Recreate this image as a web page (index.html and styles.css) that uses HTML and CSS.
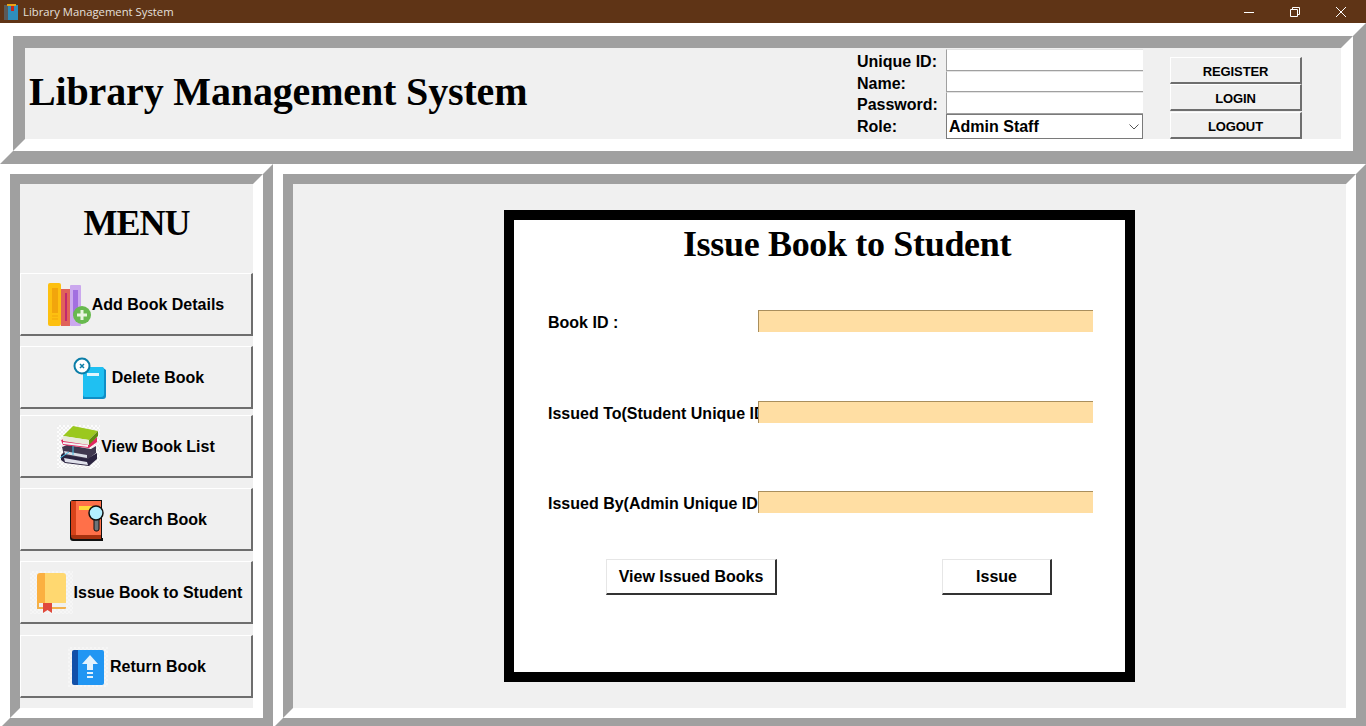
FILE: index.html
```html
<!DOCTYPE html>
<html lang="en">
<head>
  <meta charset="UTF-8">
  <title>Library Management System</title>
  <link rel="stylesheet" href="styles.css">
</head>
<body>

  <div class="title-bar">
    <div class="app-name">
      <svg class="app-icon" width="14" height="16" viewBox="0 0 14 16">
        <rect x="0" y="1" width="5" height="15" fill="#5a5a5a"/>
        <rect x="4" y="1" width="10" height="15" fill="#2f8dbb"/>
        <rect x="3" y="0" width="9" height="2" fill="#e8a317"/>
        <rect x="7" y="2" width="3" height="5" fill="#c8261c"/>
      </svg>
      <span>Library Management System</span>
    </div>
    <div class="window-controls">
      <svg width="12" height="12" viewBox="0 0 12 12"><path d="M1 6.500h10" stroke="#fff" fill="none"/></svg>
      <svg width="12" height="12" viewBox="0 0 12 12"><path d="M1.500 3.500h7v7h-7zM3.500 3.500v-2h7v7h-2" stroke="#fff" fill="none"/></svg>
      <svg width="12" height="12" viewBox="0 0 12 12"><path d="M1 1l10 10M11 1L1 11" stroke="#fff" fill="none"/></svg>
    </div>
  </div>

  <header class="bevel-outer header-panel">
    <div class="bevel-inner header-inner">
      <h1 class="app-title">Library Management System</h1>
      <div class="login-form">
        <label class="login-label">Unique ID:</label><input class="login-input" type="text">
        <label class="login-label">Name:</label><input class="login-input" type="text">
        <label class="login-label">Password:</label><input class="login-input" type="password">
        <label>Role:</label>
        <div class="role-select">
          <span>Admin Staff</span>
          <svg width="10" height="6" viewBox="0 0 10 6"><path d="M.5.5L5 5 9.500.5" stroke="#555" fill="none"/></svg>
        </div>
      </div>
      <div class="login-buttons">
        <button class="bevel-btn login-btn">REGISTER</button>
        <button class="bevel-btn login-btn">LOGIN</button>
        <button class="bevel-btn login-btn logout-btn">LOGOUT</button>
      </div>
    </div>
  </header>

  <div class="content">
    <aside class="bevel-outer side-panel">
      <div class="bevel-inner side-inner">
        <div class="menu-title">MENU</div>

        <button class="bevel-btn menu-btn">
          <svg class="menu-icon" viewBox="0 0 44 44">
            <rect x="0" y="0" width="13" height="43" rx="2" fill="#fdc010"/>
            <rect x="4" y="5" width="6" height="25" fill="#f2a50c"/>
            <path d="M4 33h6M4 36h6" stroke="#f2a50c"/>
            <rect x="13" y="6" width="9" height="37" fill="#e0625a"/>
            <rect x="17" y="10" width="2" height="28" fill="#c2296f"/>
            <rect x="22" y="2" width="11" height="41" rx="1" fill="#cba8ee"/>
            <rect x="25" y="7" width="5" height="26" fill="#a26fe0"/>
            <circle cx="34" cy="32" r="9" fill="#68b94f"/>
            <path d="M34 27v10M29 32h10" stroke="#e8f5e0" stroke-width="3"/>
          </svg>
          <span>Add Book Details</span>
        </button>

        <button class="bevel-btn menu-btn">
          <svg class="menu-icon" viewBox="0 0 44 44">
            <path d="M15 11h19l4 3v26a3 3 0 0 1-3 3H15z" fill="#0f8ec6"/>
            <path d="M15 11h19a2 2 0 0 1 2 2v25a3 3 0 0 1-3 3H17a2 2 0 0 1-2-2z" fill="#1fc0f2"/>
            <rect x="19" y="17" width="12" height="3" fill="#dff5fd"/>
            <circle cx="14" cy="10" r="7.500" fill="#fff" stroke="#0b7ea8" stroke-width="2"/>
            <path d="M12 8l4 4M16 8l-4 4" stroke="#0b7ea8" stroke-width="1.500"/>
          </svg>
          <span>Delete Book</span>
        </button>

        <button class="bevel-btn menu-btn">
          <svg class="menu-icon" viewBox="0 0 44 44">
            <defs>
              <pattern id="check" width="4" height="4" patternUnits="userSpaceOnUse">
                <rect width="4" height="4" fill="#fcfcfc"/>
                <rect width="2" height="2" fill="#eeeeee"/>
                <rect x="2" y="2" width="2" height="2" fill="#eeeeee"/>
              </pattern>
              <pattern id="check-faint" width="4" height="4" patternUnits="userSpaceOnUse">
                <rect width="4" height="4" fill="#f6f6f6"/>
                <rect width="2" height="2" fill="#f1f1f1"/>
                <rect x="2" y="2" width="2" height="2" fill="#f1f1f1"/>
              </pattern>
            </defs>
            <rect width="43" height="43" fill="url(#check)"/>
            <path d="M4 30l3-3 26 5 7-4v6l-8 7-24-3-4-3z" fill="#2b2440"/>
            <path d="M7 33l23 4 1 3-23-3z" fill="#dfe0ea"/>
            <path d="M5 22l5-2 24 4 5-3v7l-8 6-24-4z" fill="#40384f"/>
            <path d="M7 26l23 4v3L8 29z" fill="#d8dbe4"/>
            <path d="M4 15l6-2 24 4 6-5v5l-8 6-26-3z" fill="#e0285f"/>
            <path d="M6 17l25 3v2L6 19z" fill="#f4f4f6"/>
            <path d="M6 11l10-10 25 5-9 9z" fill="#9bc81e"/>
            <path d="M6 11l26 4v5L6 16z" fill="#e8eadc"/>
            <path d="M32 15l9-9v5l-9 9z" fill="#5f8a10"/>
            <path d="M3 33l9-6M16 21v9" stroke="#45c2e6" fill="none"/>
          </svg>
          <span>View Book List</span>
        </button>

        <button class="bevel-btn menu-btn">
          <svg class="menu-icon" viewBox="0 0 44 44">
            <path d="M8 2h29v38h1v3H8a3 3 0 0 1-3-3V5a3 3 0 0 1 3-3z" fill="#111"/>
            <rect x="6" y="3" width="5" height="34" fill="#d8431a"/>
            <rect x="11" y="3" width="25" height="34" fill="#ff7049"/>
            <path d="M6 37h30v4H9a3 3 0 0 1-3-3z" fill="#a8320f"/>
            <rect x="14" y="8" width="14" height="4" fill="#ffd83a"/>
            <rect x="29" y="19" width="5" height="14" rx="2" fill="#6d7478" stroke="#111"/>
            <circle cx="31" cy="15" r="7" fill="#b3efff" stroke="#111" stroke-width="1.500"/>
          </svg>
          <span>Search Book</span>
        </button>

        <button class="bevel-btn menu-btn">
          <svg class="menu-icon" viewBox="0 0 44 44">
            <rect width="43" height="43" fill="url(#check-faint)"/>
            <path d="M10 2h8v36h-11V5a3 3 0 0 1 3-3z" fill="#fbb040"/>
            <path d="M15 2h18a3 3 0 0 1 3 3v32H15z" fill="#ffd870"/>
            <rect x="7" y="32" width="29" height="6" rx="1" fill="#f2b04c"/>
            <rect x="9" y="32" width="27" height="4" fill="#f0f0ee"/>
            <path d="M13 32h9v10l-4.500-3-4.500 3z" fill="#e04a3c"/>
          </svg>
          <span>Issue Book to Student</span>
        </button>

        <button class="bevel-btn menu-btn">
          <svg class="menu-icon" viewBox="0 0 44 44">
            <rect x="2" y="2" width="40" height="40" fill="url(#check-faint)"/>
            <path d="M9 5h27a2 2 0 0 1 2 2v31a2 2 0 0 1-2 2H9z" fill="#2196f3"/>
            <path d="M8 5h4v35H8a2 2 0 0 1-2-2V7a2 2 0 0 1 2-2z" fill="#1250a8"/>
            <path d="M24 10l8 9h-5v6h-6v-6h-5z" fill="#e3f2fd"/>
            <path d="M21 27h6v2h-6zM21 31h6v2h-6z" fill="#e3f2fd"/>
          </svg>
          <span>Return Book</span>
        </button>
      </div>
    </aside>

    <main class="bevel-outer main-panel">
      <div class="bevel-inner main-inner">
        <section class="issue-card">
          <h2 class="issue-title">Issue Book to Student</h2>
          <div class="issue-row">
            <label class="issue-label">Book ID :</label>
            <input class="issue-input" type="text">
          </div>
          <div class="issue-row">
            <label class="issue-label">Issued To(Student Unique ID</label>
            <input class="issue-input" type="text">
          </div>
          <div class="issue-row">
            <label class="issue-label">Issued By(Admin Unique ID</label>
            <input class="issue-input" type="text">
          </div>
          <div class="issue-actions">
            <button class="plain-btn view-btn">View Issued Books</button>
            <button class="plain-btn issue-btn">Issue</button>
          </div>
        </section>
      </div>
    </main>
  </div>

</body>
</html>
```

FILE: styles.css
```css
* {
  box-sizing: border-box;
}

html, body {
  height: 726px;
  margin: 0;
  overflow: hidden;
}

body {
  background-color: #fff;
  font-family: "Liberation Sans", Arial, sans-serif;
  font-weight: bold;
  font-size: 16px;
  color: #000;
}

/* title bar */
.title-bar {
  height: 23px;
  background-color: #5f3416;
  display: flex;
  justify-content: space-between;
  align-items: center;
  color: #e6e0dc;
}

.app-name {
  display: flex;
  align-items: center;
  padding-left: 4px;
  font-family: "Open Sans", sans-serif;
  font-weight: normal;
  font-size: 11.300px;
}

.app-icon {
  margin-right: 5px;
}

.window-controls {
  display: flex;
  gap: 34px;
  padding-right: 19px;
}

/* double bevel, the mitred corners come from the css borders */
.bevel-outer {
  border-style: solid;
  border-color: #fff #a0a0a0 #a0a0a0 #fff;
}

.bevel-inner {
  height: 100%;
  border-style: solid;
  border-color: #a0a0a0 #fff #fff #a0a0a0;
  background-color: #f0f0f0;
}

.bevel-btn {
  display: flex;
  justify-content: center;
  align-items: center;
  padding: 0;
  background-color: #f0f0f0;
  border-style: solid;
  border-width: 1px 2px 2px 1px;
  border-color: #fff #6e6e6e #6e6e6e #fff;
  font-family: "Liberation Sans", Arial, sans-serif;
  font-weight: bold;
  color: #000;
}

/* header */
.header-panel {
  height: 141px;
  border-width: 13px;
}

.header-inner {
  border-width: 12px;
  display: flex;
  align-items: flex-start;
}

.app-title {
  width: 828px;
  margin: 0;
  padding: 21px 0 0 4px;
  font-family: "Liberation Serif", "Times New Roman", serif;
  font-size: 40px;
  line-height: 46px;
  letter-spacing: -.15px;
  white-space: nowrap;
}

.login-form {
  width: 286px;
  margin: 1px 0 0 4px;
  display: grid;
  grid-template-columns: 89px 197px;
  grid-template-rows: 22px 21px 22px 25px;
  align-items: center;
}

.login-form label {
  line-height: 20px;
}

.login-label {
  padding-top: 4px;
}

.login-input {
  height: 100%;
  width: 100%;
  padding: 0;
  background-color: #fff;
  border: none;
  border-top: 1px solid #e4e4e4;
  border-left: 1px solid #a0a0a0;
  border-bottom: 1px solid #a0a0a0;
}

.role-select {
  height: 100%;
  display: flex;
  justify-content: space-between;
  align-items: center;
  padding: 0 3px 0 2px;
  background-color: #fff;
  border: 1px solid #7a7a7a;
}

.login-buttons {
  width: 132px;
  margin: 9px 0 0 27px;
  display: flex;
  flex-direction: column;
}

.login-btn {
  width: 132px;
  height: 27px;
  padding-top: 2px;
  font-size: 13px;
  letter-spacing: -.1px;
}

.logout-btn {
  margin-top: 1px;
}

/* lower part */
.content {
  height: 564px;
  display: flex;
}

.side-panel {
  width: 273px;
  height: 564px;
  border-width: 10px;
}

.side-inner {
  border-width: 10px;
  display: flex;
  flex-direction: column;
}

.menu-title {
  height: 89px;
  padding-top: 18px;
  text-align: center;
  font-family: "Liberation Serif", "Times New Roman", serif;
  font-size: 36px;
  line-height: 42px;
  letter-spacing: -1px;
}

.menu-btn {
  flex: none;
  width: 233px;
  height: 63px;
  padding-top: 1px;
  font-size: 16px;
}

.menu-btn:nth-of-type(2) {
  margin-top: 10px;
}

.menu-btn:nth-of-type(3) {
  margin-top: 6px;
}

.menu-btn:nth-of-type(4),
.menu-btn:nth-of-type(5) {
  margin-top: 10px;
}

.menu-btn:nth-of-type(6) {
  margin-top: 11px;
}

.menu-icon {
  width: 44px;
  height: 44px;
  flex: none;
}

.main-panel {
  flex: 1;
  height: 564px;
  border-width: 10px;
}

.main-inner {
  border-width: 10px;
  padding: 26px 0 0 211px;
}

/* issue book card */
.issue-card {
  width: 631px;
  height: 472px;
  padding: 0 0 0 34px;
  background-color: #fff;
  border: 10px solid #000;
}

.issue-title {
  margin: 4px 0 45px;
  text-align: center;
  width: 598px;
  font-family: "Liberation Serif", "Times New Roman", serif;
  font-size: 36px;
  line-height: 41px;
  letter-spacing: -.33px;
}

.issue-row {
  display: flex;
  align-items: center;
  height: 22px;
  margin-bottom: 69px;
}

.issue-row:nth-of-type(2) {
  margin-bottom: 68px;
}

.issue-label {
  width: 210px;
  flex: none;
  overflow: hidden;
  white-space: nowrap;
  padding-top: 4px;
}

.issue-input {
  width: 335px;
  height: 22px;
  padding: 0;
  background-color: #ffdea3;
  border: none;
  border-top: 1px solid #a98e5c;
  border-left: 1px solid #a98e5c;
}

.issue-actions {
  display: flex;
  margin-top: -23px;
  padding-left: 58px;
}

.plain-btn {
  height: 36px;
  padding: 0;
  background-color: #fff;
  border-style: solid;
  border-width: 1px 2px 2px 1px;
  border-color: #e6e6e6 #333 #333 #e6e6e6;
  font-family: "Liberation Sans", Arial, sans-serif;
  font-weight: bold;
  font-size: 16px;
  color: #000;
}

.view-btn {
  width: 171px;
}

.issue-btn {
  width: 110px;
  margin-left: 165px;
}
```
